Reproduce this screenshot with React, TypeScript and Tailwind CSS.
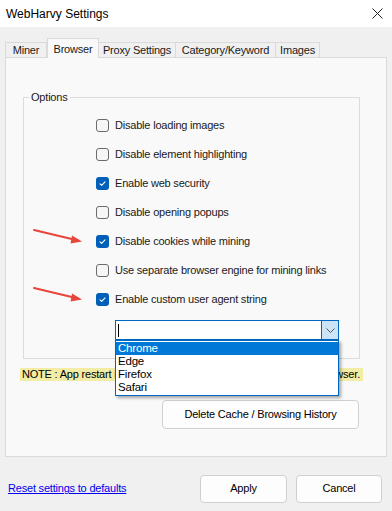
import { useState } from "react";

const options = [
  { label: "Disable loading images", checked: false },
  { label: "Disable element highlighting", checked: false },
  { label: "Enable web security", checked: true },
  { label: "Disable opening popups", checked: false },
  { label: "Disable cookies while mining", checked: true },
  { label: "Use separate browser engine for mining links", checked: false },
  { label: "Enable custom user agent string", checked: true },
];

const tabs = [
  { label: "Miner", w: "w-[42px]" },
  { label: "Browser", w: "w-[52px]" },
  { label: "Proxy Settings", w: "w-[77px]" },
  { label: "Category/Keyword", w: "w-[100px]" },
  { label: "Images", w: "w-[44px]" },
];

const agents = ["Chrome", "Edge", "Firefox", "Safari"];

function Checkbox({ checked }: { checked: boolean }) {
  if (checked) {
    return (
      <span className="flex h-[13px] w-[13px] shrink-0 items-center justify-center rounded-[3px] bg-[#005fb8]">
        <svg width="9" height="9" viewBox="0 0 9 9" fill="none">
          <path d="M2 4.8 L3.7 6.4 L7 2.8" stroke="white" strokeWidth="1.1" strokeLinecap="round" strokeLinejoin="round" />
        </svg>
      </span>
    );
  }
  return <span className="h-[13px] w-[13px] shrink-0 rounded-[3px] border border-[#6b6b6b] bg-[#f6f6f6]" />;
}

function Arrow() {
  return (
    <svg width="54" height="18" viewBox="0 0 54 18" fill="none">
      <path d="M2 3 L46 13.5" stroke="#e8453c" strokeWidth="2" strokeLinecap="round" />
      <path d="M40 8.5 L50 14.5 L38.5 16.5 Z" fill="#e8453c" />
    </svg>
  );
}

export default function App() {
  const [checks, setChecks] = useState(options.map((o) => o.checked));

  return (
    <div className="relative flex h-[511px] w-[392px] flex-col whitespace-nowrap bg-[#f0f0f0] font-['Liberation_Sans',Arial,sans-serif] text-[11px] tracking-[-0.2px] text-[#1a1a1a]">
      <div className="flex h-[27px] items-center justify-between bg-white pl-[6px] pr-[9px]">
        <span className="text-[12px] tracking-normal text-black">WebHarvy Settings</span>
        <svg width="11" height="11" viewBox="0 0 11 11">
          <path d="M0.5 0.5 L10.5 10.5 M10.5 0.5 L0.5 10.5" stroke="#222" strokeWidth="1" />
        </svg>
      </div>

      <div className="flex h-[30px] items-end pl-[5px] pt-[11px]">
        {tabs.map((t) =>
          t.label === "Browser" ? (
            <div
              key={t.label}
              className={`${t.w} relative z-10 -mb-px flex h-[20px] items-start justify-center border border-b-0 border-[#dadada] bg-[#f9f9f9] pt-[2px]`}
            >
              {t.label}
            </div>
          ) : (
            <div
              key={t.label}
              className={`${t.w} flex h-[15px] items-center justify-center border border-b-0 border-l-0 border-[#dadada] bg-[#f0f0f0] first:border-l`}
            >
              {t.label}
            </div>
          )
        )}
      </div>

      <div className="mx-[5px] flex h-[400px] flex-col border border-[#dadada] bg-[#f9f9f9]">
        <div className="ml-[17px] mt-[39px] h-[262px] w-[337px] border border-[#dcdcdc]">
          <div className="-mt-[8px] ml-[5px] w-fit bg-[#f9f9f9] px-[2px] leading-[14px]">Options</div>
          <div className="mt-[7px] flex flex-col pl-[72px]">
            {options.map((o, i) => (
              <div key={o.label} className="relative flex h-[29px] items-center gap-[6px]" onClick={() => setChecks(checks.map((c, j) => (j === i ? !c : c)))}>
                {(i === 4 || i === 6) && (
                  <div className="absolute -left-[64px] top-[0px]">
                    <Arrow />
                  </div>
                )}
                <Checkbox checked={checks[i]} />
                <span>{o.label}</span>
              </div>
            ))}
          </div>
          <div className="relative ml-[91px] mt-[6px] flex h-[20px] w-[224px] border border-[#0067c0] bg-white">
            <div className="flex flex-1 items-center pl-[2px]">
              <span className="h-[13px] w-px bg-black" />
            </div>
            <div className="flex w-[17px] items-center justify-center border-l border-[#0067c0] bg-[#cce4f7]">
              <svg width="9" height="5" viewBox="0 0 9 5">
                <path d="M0.5 0.5 L4.5 4.5 L8.5 0.5" stroke="#555" fill="none" strokeWidth="1" />
              </svg>
            </div>
            <div className="absolute -left-px top-[19px] z-20 flex w-[224px] flex-col border border-[#0067c0] bg-white py-px shadow-[2px_2px_3px_rgba(0,0,0,0.35)]">
              {agents.map((a, i) => (
                <div
                  key={a}
                  className={`h-[13px] pl-[2px] text-[11.5px] leading-[13px] ${i === 0 ? "bg-[#0078d7] text-white" : "text-black"}`}
                >
                  {a}
                </div>
              ))}
            </div>
          </div>
        </div>

        <div className="ml-[14px] mt-[9px] flex h-[13px] w-[343px] justify-between overflow-hidden bg-[#f3eca5] pl-[2px] pr-[3px] leading-[13px] text-black">
          <span>NOTE : App restart is needed to apply changes in the</span>
          <span>browser.</span>
        </div>

        <div className="ml-[156px] mt-[19px] flex h-[29px] w-[197px] items-center justify-center rounded-[4px] border border-[#d0d0d0] bg-[#fdfdfd] text-black">
          Delete Cache / Browsing History
        </div>
      </div>

      <div className="flex flex-1 items-center pl-[8px] pr-[10px] pt-[9px]">
        <span className="flex-1 text-[#0000ee] underline">Reset settings to defaults</span>
        <div className="flex gap-[9px]">
          <div className="flex h-[28px] w-[87px] items-center justify-center rounded-[4px] border border-[#d0d0d0] bg-[#fdfdfd] text-black">
            Apply
          </div>
          <div className="flex h-[28px] w-[86px] items-center justify-center rounded-[4px] border border-[#d0d0d0] bg-[#fdfdfd] text-black">
            Cancel
          </div>
        </div>
      </div>
    </div>
  );
}
